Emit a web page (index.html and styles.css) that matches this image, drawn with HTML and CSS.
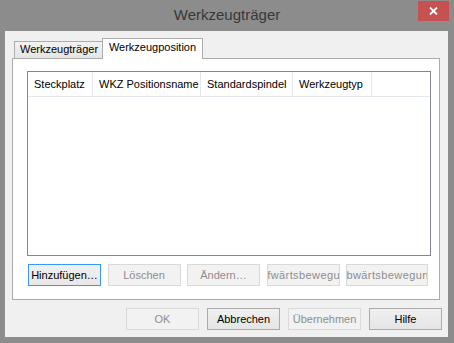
FILE: index.html
```html
<!DOCTYPE html>
<html lang="de">
<head>
    <meta charset="UTF-8">
    <meta name="viewport" content="width=device-width, initial-scale=1.0">
    <title>Werkzeugträger</title>
    <link rel="stylesheet" href="styles.css">
</head>
<body>

    <div class="window">
        <div class="titlebar">
            <span></span>
            <div class="title">Werkzeugträger</div>
            <button class="close" title="Schließen">
                <svg width="9" height="8" viewBox="0 0 9 8">
                    <path d="M1 0.5 L8 7.5 M8 0.5 L1 7.5" stroke="#fff" stroke-width="1.8" fill="none"/>
                </svg>
            </button>
        </div>

        <div class="client">
            <div class="tabs">
                <div class="tab">Werkzeugträger</div>
                <div class="tab active">Werkzeugposition</div>
            </div>

            <div class="panel">
                <div class="list">
                    <div class="list-head">
                        <div class="col col-slot">Steckplatz</div>
                        <div class="col col-name">WKZ Positionsname</div>
                        <div class="col col-spindle">Standardspindel</div>
                        <div class="col col-type">Werkzeugtyp</div>
                    </div>
                </div>

                <div class="actions">
                    <button class="btn default"><span>Hinzufügen…</span></button>
                    <button class="btn" disabled><span>Löschen</span></button>
                    <button class="btn" disabled><span>Ändern…</span></button>
                    <button class="btn long" disabled><span>Aufwärtsbewegung</span></button>
                    <button class="btn long wide" disabled><span>Abwärtsbewegung</span></button>
                </div>
            </div>

            <div class="footer">
                <button class="btn" disabled><span>OK</span></button>
                <button class="btn"><span>Abbrechen</span></button>
                <button class="btn" disabled><span>Übernehmen</span></button>
                <button class="btn"><span>Hilfe</span></button>
            </div>
        </div>
    </div>

</body>
</html>
```

FILE: styles.css
```css
/* Fenster */
body {
    margin: 0;
    background-color: #8c8c8c;
    font-family: 'Liberation Sans', Arial, sans-serif;
    font-size: 11px;
    color: #000;
}

.window {
    width: 454px;
    height: 343px;
    background-color: #8c8c8c;
}

/* Titelleiste */
.titlebar {
    height: 31px;
    display: grid;
    grid-template-columns: 1fr auto 1fr;
}

.title {
    font-size: 15px;
    line-height: 30px;
    color: #383838;
}

.close {
    justify-self: end;
    align-self: start;
    width: 31px;
    height: 20px;
    margin: 1px 5px 0 0;
    padding: 0;
    border: none;
    background-color: #c75050;
    display: flex;
    align-items: center;
    justify-content: center;
}

/* Innenbereich */
.client {
    height: 306px;
    margin: 0 6px 0 5px;
    padding: 7px 6px 7px 7px;
    box-sizing: border-box;
    background-color: #f0f0f0;
}

/* Reiter */
.tabs {
    display: flex;
    align-items: flex-end;
    height: 20px;
    padding-left: 2px;
}

.tab {
    box-sizing: border-box;
    width: 89px;
    height: 17px;
    padding-left: 5px;
    line-height: 15px;
    border: 1px solid #acacac;
    border-bottom: none;
    background: linear-gradient(#f2f2f2, #e5e5e5);
    white-space: nowrap;
}

.tab.active {
    position: relative;
    width: 101px;
    height: 21px;
    margin-left: -1px;
    margin-bottom: -1px;
    padding-left: 0;
    text-align: center;
    line-height: 17px;
    background: #fff;
}

.panel {
    box-sizing: border-box;
    width: 428px;
    height: 242px;
    padding: 12px 0 0 14px;
    border: 1px solid #acacac;
    background-color: #fff;
}

/* Liste */
.list {
    box-sizing: border-box;
    width: 404px;
    height: 185px;
    border: 1px solid #828790;
    background-color: #fff;
}

.list-head {
    display: flex;
    height: 25px;
    box-sizing: border-box;
    border-bottom: 1px solid #e5e9ef;
}

.col {
    box-sizing: border-box;
    padding-left: 6px;
    line-height: 25px;
    border-right: 1px solid #e3e8ef;
    white-space: nowrap;
}

.col-slot { width: 65px; }
.col-name { width: 108px; }
.col-spindle { width: 92px; }
.col-type { width: 79px; }

/* Schaltflächen */
.btn {
    box-sizing: border-box;
    width: 73px;
    height: 22px;
    padding: 0;
    display: block;
    overflow: hidden;
    white-space: nowrap;
    font-family: inherit;
    font-size: 11px;
    line-height: 20px;
    color: #000;
    border: 1px solid #acacac;
    background: linear-gradient(#f0f0f0, #e5e5e5);
}

/* zu lange Beschriftungen mittig abschneiden */
.btn span {
    display: block;
    margin: 0 -30px;
    text-align: center;
}

.btn.long span {
    letter-spacing: 0.4px;
}

.btn:disabled {
    color: #8d8d8d;
    border-color: #d9d9d9;
    background: #f2f2f2;
}

.btn.default {
    border-color: #3399ff;
    background: linear-gradient(#f0f0f0, #e8e8e8);
}

.btn.wide {
    width: 82px;
}

.actions {
    display: flex;
    gap: 6.5px;
    margin: 8px 0 0 1px;
}

.footer {
    display: flex;
    justify-content: flex-end;
    gap: 8px;
    margin-top: 8px;
}
```
